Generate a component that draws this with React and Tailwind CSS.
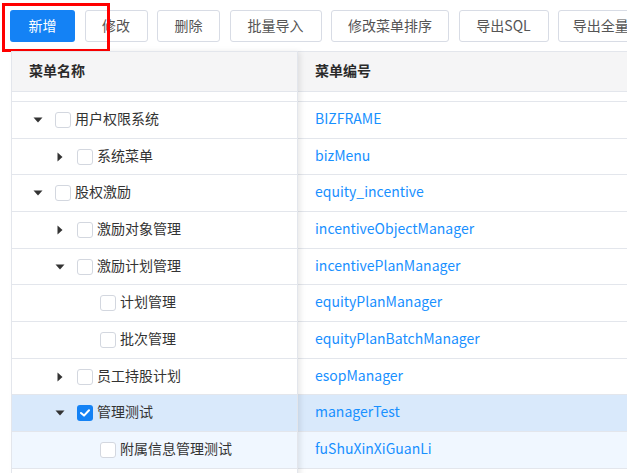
import React from "react";

const font = { fontFamily: '"Noto Sans CJK SC", "Noto Sans", sans-serif' };

const buttons = [
  { label: "新增", w: "w-[65px]", primary: true },
  { label: "修改", w: "w-[63px]" },
  { label: "删除", w: "w-[63px]" },
  { label: "批量导入", w: "w-[92px]" },
  { label: "修改菜单排序", w: "w-[118px]" },
  { label: "导出SQL", w: "w-[90px]" },
  { label: "导出全量SQL", w: "w-[112px]" },
];

// 菜单树（已展开的部分）
const rows = [
  { level: 0, caret: "down", name: "用户权限系统", code: "BIZFRAME", h: "h-[37px]" },
  { level: 1, caret: "right", name: "系统菜单", code: "bizMenu", h: "h-[36px]" },
  { level: 0, caret: "down", name: "股权激励", code: "equity_incentive", h: "h-[37px]" },
  { level: 1, caret: "right", name: "激励对象管理", code: "incentiveObjectManager", h: "h-[37px]" },
  { level: 1, caret: "down", name: "激励计划管理", code: "incentivePlanManager", h: "h-[36px]" },
  { level: 2, name: "计划管理", code: "equityPlanManager", h: "h-[37px]" },
  { level: 2, name: "批次管理", code: "equityPlanBatchManager", h: "h-[37px]" },
  { level: 1, caret: "right", name: "员工持股计划", code: "esopManager", h: "h-[36px]" },
  { level: 1, caret: "down", name: "管理测试", code: "managerTest", h: "h-[37px]", checked: true, state: "selected" },
  { level: 2, name: "附属信息管理测试", code: "fuShuXinXiGuanLi", h: "h-[37px]", state: "hover" },
];

const indent = ["pl-[17px]", "pl-[39px]", "pl-[62px]"];

const rowBg = (state) =>
  state === "selected" ? "bg-[#d9e9fb]" : state === "hover" ? "bg-[#f0f7ff]" : "bg-white";

const Caret = ({ dir }) => {
  if (dir === "down")
    return (
      <svg width="10" height="6" viewBox="0 0 10 6">
        <path d="M0.5 0.5 L9.5 0.5 L5 5.5 Z" fill="#333" />
      </svg>
    );
  if (dir === "right")
    return (
      <svg width="6" height="10" viewBox="0 0 6 10">
        <path d="M0.5 0.5 L5.5 5 L0.5 9.5 Z" fill="#333" />
      </svg>
    );
  return null;
};

const Checkbox = ({ checked }) =>
  checked ? (
    <span className="w-[16px] h-[16px] rounded-[3px] bg-[#1482f5] flex items-center justify-center shrink-0">
      <svg width="10" height="8" viewBox="0 0 10 8">
        <path d="M1 4 L4 6.6 L9 1.2" stroke="#fff" strokeWidth="2" fill="none" strokeLinecap="round" strokeLinejoin="round" />
      </svg>
    </span>
  ) : (
    <span className="w-[16px] h-[16px] rounded-[3px] border border-[#d3d7df] bg-white shrink-0" />
  );

const RedBox = ({ className }) => (
  <div className={`absolute border-[3px] border-[#ff0000] pointer-events-none ${className}`} />
);

export default function App() {
  return (
    <div className="relative w-[627px] h-[473px] overflow-hidden bg-white text-[14px] text-[#333]" style={font}>
      {/* 工具栏 */}
      <div className="flex gap-[9.5px] pl-[10px] pt-[10px] whitespace-nowrap">
        {buttons.map((b) => (
          <button
            key={b.label}
            className={`${b.w} h-[32px] pb-[2px] shrink-0 rounded-[3px] flex items-center justify-center ${
              b.primary ? "bg-[#1482f5] text-white" : "bg-white border border-[#d8dce5] text-[#555]"
            }`}
          >
            {b.label}
          </button>
        ))}
      </div>

      {/* 树形表格 */}
      <div className="flex mt-[9px] ml-[11px] w-[700px]">
        {/* 固定列 */}
        <div className="relative z-10 w-[287px] shrink-0 border-l border-r border-[#e3e6ec] shadow-[3px_0_6px_-1px_rgba(0,0,0,0.10)]">
          <div className="h-[41px] pb-[2px] border-t border-b border-[#e3e6ec] bg-[#f5f5f6] flex items-center pl-[17px] font-bold text-[#2a2a2a]">
            菜单名称
          </div>
          <div className="h-[10px] border-b border-[#e3e6ec] bg-white" />
          {rows.map((r) => (
            <div
              key={r.name}
              className={`${r.h} ${rowBg(r.state)} ${indent[r.level]} border-b border-[#e3e6ec] flex items-center`}
            >
              <span className="w-[18px] flex justify-center mr-[8px]">
                <Caret dir={r.caret} />
              </span>
              <Checkbox checked={r.checked} />
              <span className="ml-[4px] pb-[3px]">{r.name}</span>
            </div>
          ))}
          <div className="h-[20px] bg-white" />
        </div>

        {/* 编号列 */}
        <div className="flex-1">
          <div className="h-[41px] pb-[2px] border-t border-b border-[#e3e6ec] bg-[#f5f5f6] flex items-center pl-[17px] font-bold text-[#2a2a2a]">
            菜单编号
          </div>
          <div className="h-[10px] border-b border-[#e3e6ec] bg-white" />
          {rows.map((r) => (
            <div
              key={r.code}
              className={`${r.h} ${rowBg(r.state)} border-b border-[#e3e6ec] flex items-center pl-[17px] pb-[3px] text-[#1890ff]`}
            >
              {r.code}
            </div>
          ))}
        </div>
      </div>

      <RedBox className="left-[2px] top-[3px] w-[108px] h-[49px]" />
      <RedBox className="left-[57px] top-[392px] w-[137px] h-[35px]" />
    </div>
  );
}
